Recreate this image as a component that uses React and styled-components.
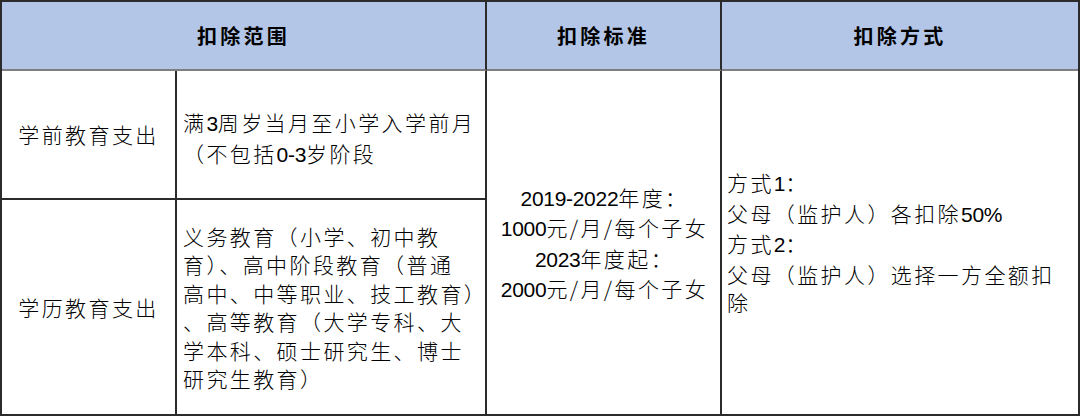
import React from "react";
import styled, { createGlobalStyle } from "styled-components";

const GlobalStyle = createGlobalStyle`
html, body {
    margin: 0;
    padding: 0;
    background: #ffffff;
}
`;

const Table = styled.div`
box-sizing: border-box;
width: 1080px;
height: 416px;
display: grid;
grid-template-columns: 175px 310px 235px 1fr;
grid-template-rows: 69px 129px 1fr;
border: 2px solid #2b2b2b;
font-family: "Noto Sans CJK SC", sans-serif;
font-size: 21px;
font-weight: 300;
letter-spacing: 2.4px;
color: #000000;
background: #ffffff;
`;

const Head = styled.div`
box-sizing: border-box;
grid-column: ${props => props.span ? "span 2" : "auto"};
display: flex;
align-items: center;
justify-content: center;
background-color: #b4c6e7;
border-bottom: 2px solid #7f7f7f;
border-right: ${props => props.last ? "none" : "2px solid #2b2b2b"};
font-weight: 700;
font-size: 20px;
letter-spacing: 3.2px;
`;

const Cell = styled.div`
box-sizing: border-box;
display: flex;
align-items: center;
justify-content: ${props => props.center ? "center" : "flex-start"};
text-align: ${props => props.center ? "center" : "left"};
padding: ${props => props.pad || "0 0 0 6px"};
grid-row: ${props => props.tall ? "span 2" : "auto"};
border-right: ${props => props.last ? "none" : "2px solid #2b2b2b"};
border-bottom: ${props => props.bottom ? "2px solid #2b2b2b" : "none"};
line-height: 28.5px;
white-space: nowrap;
`;

const Num = styled.span`
font-family: "Liberation Sans", sans-serif;
font-weight: 400;
letter-spacing: -0.3px;
`;

const App = () => {
    return (
        <React.Fragment>
            <GlobalStyle />
            <Table>
                <Head span>扣除范围</Head>
                <Head>扣除标准</Head>
                <Head last>扣除方式</Head>

                <Cell center bottom pad="0">学前教育支出</Cell>
                <Cell bottom pad="8px 0 0 6px">
                    <div>
                        满<Num>3</Num>周岁当月至小学入学前月<br />
                        （不包括<Num>0-3</Num>岁阶段
                    </div>
                </Cell>
                <Cell center tall pad="2px 0 0 2px">
                    <div>
                        <Num>2019-2022</Num>年度：<br />
                        <Num>1000</Num>元/月/每个子女<br />
                        <Num>2023</Num>年度起：<br />
                        <Num>2000</Num>元/月/每个子女
                    </div>
                </Cell>
                <Cell tall last pad="0 0 0 5px">
                    <div>
                        方式<Num>1</Num>：<br />
                        父母（监护人）各扣除<Num>50%</Num><br />
                        方式<Num>2</Num>：<br />
                        父母（监护人）选择一方全额扣<br />
                        除
                    </div>
                </Cell>

                <Cell center pad="0">学历教育支出</Cell>
                <Cell pad="0 0 0 6px">
                    <div>
                        义务教育（小学、初中教<br />
                        育）、高中阶段教育（普通<br />
                        高中、中等职业、技工教育）<br />
                        、高等教育（大学专科、大<br />
                        学本科、硕士研究生、博士<br />
                        研究生教育）
                    </div>
                </Cell>
            </Table>
        </React.Fragment>
    );
};

export default App;
